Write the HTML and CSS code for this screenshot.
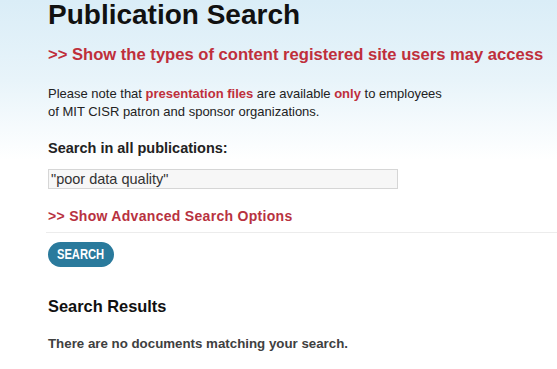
FILE: index.html
```html
<!DOCTYPE html>
<html>
<head>
<meta charset="utf-8">
<link rel="stylesheet" href="styles.css">
</head>
<body>
<div class="page">
  <h1 class="title">Publication Search</h1>
  <a class="toggle-link" href="#">&gt;&gt; Show the types of content registered site users may access</a>
  <p class="note">Please note that <strong>presentation files</strong> are available <strong>only</strong> to employees<br>of MIT CISR patron and sponsor organizations.</p>
  <label class="field-label" for="q">Search in all publications:</label>
  <input class="search-input" id="q" type="text" value="&quot;poor data quality&quot;">
  <a class="advanced-link" href="#">&gt;&gt; Show Advanced Search Options</a>
  <div class="actions">
    <button class="search-btn" type="button"><span class="search-btn-text">SEARCH</span></button>
  </div>
  <h2 class="results-title">Search Results</h2>
  <p class="results-empty">There are no documents matching your search.</p>
</div>
</body>
</html>
```
FILE: styles.css
```css
html, body {
  margin: 0;
  padding: 0;
}
body {
  font-family: "Liberation Sans", Arial, sans-serif;
  color: #222;
  background: linear-gradient(to bottom, #daedf7 0px, #e8f4fa 80px, #ffffff 160px) no-repeat;
  min-height: 369px;
  overflow: hidden;
}
.page {
  padding-left: 48px;
  display: flex;
  flex-direction: column;
  align-items: flex-start;
}
.title {
  margin: 0;
  font-size: 28px;
  line-height: 30px;
  font-weight: bold;
  color: #111;
}
.toggle-link {
  margin-top: 15px;
  font-size: 16.6px;
  line-height: 20px;
  font-weight: bold;
  color: #bf2f3b;
  text-decoration: none;
}
.note {
  margin: 20px 0 0;
  font-size: 13px;
  line-height: 18px;
  color: #222;
}
.note strong {
  color: #bf2f3b;
}
.field-label {
  margin-top: 19px;
  font-size: 14.5px;
  line-height: 16px;
  font-weight: bold;
  color: #222;
}
.search-input {
  margin-top: 13px;
  box-sizing: border-box;
  width: 350px;
  height: 20px;
  padding: 0 2px;
  border: 1px solid #d6d6d6;
  background: #f7f7f7;
  font-family: "Liberation Sans", Arial, sans-serif;
  font-size: 14.5px;
  color: #333;
  outline: none;
}
.advanced-link {
  margin-top: 19px;
  font-size: 14px;
  line-height: 16px;
  letter-spacing: 0.3px;
  font-weight: bold;
  color: #b8323f;
  text-decoration: none;
}
.actions {
  margin-top: 8px;
  margin-left: -2px;
  align-self: stretch;
  border-top: 1px solid #ececec;
  padding-top: 9px;
}
.search-btn {
  margin-left: 2px;
  width: 66px;
  height: 25px;
  border: none;
  border-radius: 13px;
  background: #2a7a9c;
  color: #fff;
  font-family: "Liberation Sans", Arial, sans-serif;
  font-weight: bold;
  font-size: 14px;
  padding: 0 0 2px;
  cursor: pointer;
  display: flex;
  align-items: center;
  justify-content: center;
}
.search-btn-text {
  display: inline-block;
  transform: scaleX(0.8);
}
.results-title {
  margin: 30px 0 0;
  font-size: 16.4px;
  line-height: 18px;
  font-weight: bold;
  color: #111;
}
.results-empty {
  margin: 21px 0 0;
  font-size: 13.3px;
  line-height: 16px;
  font-weight: bold;
  color: #404040;
}
```
